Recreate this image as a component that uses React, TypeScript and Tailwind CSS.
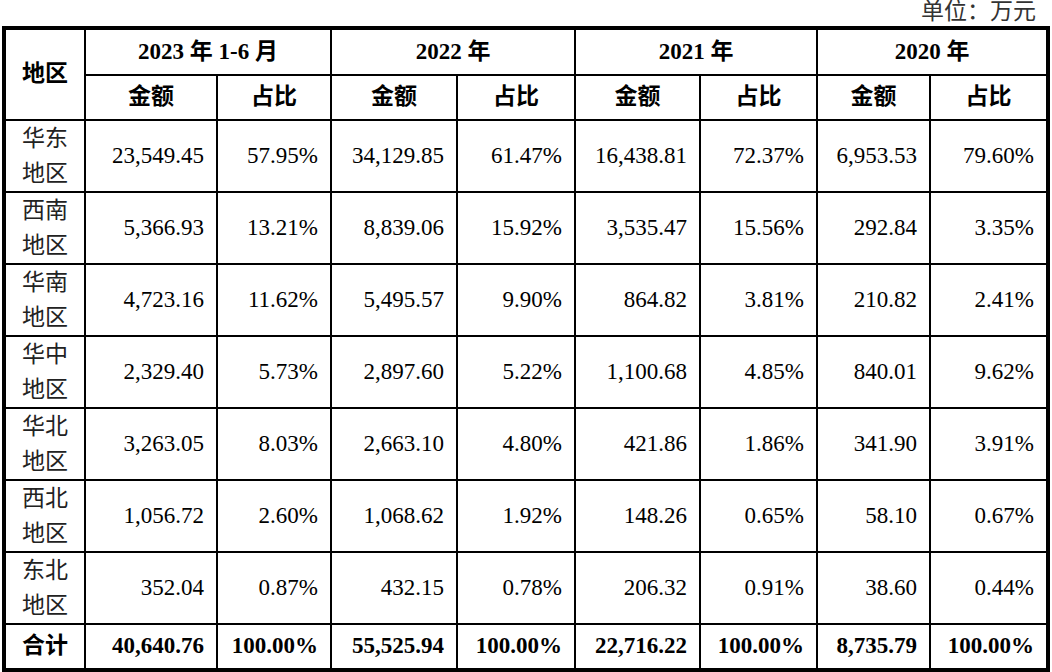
const rows = [
  { region: ["华东", "地区"], v: ["23,549.45", "57.95%", "34,129.85", "61.47%", "16,438.81", "72.37%", "6,953.53", "79.60%"], h: "h-[72px]" },
  { region: ["西南", "地区"], v: ["5,366.93", "13.21%", "8,839.06", "15.92%", "3,535.47", "15.56%", "292.84", "3.35%"], h: "h-[71px]" },
  { region: ["华南", "地区"], v: ["4,723.16", "11.62%", "5,495.57", "9.90%", "864.82", "3.81%", "210.82", "2.41%"], h: "h-[72px]" },
  { region: ["华中", "地区"], v: ["2,329.40", "5.73%", "2,897.60", "5.22%", "1,100.68", "4.85%", "840.01", "9.62%"], h: "h-[72px]" },
  { region: ["华北", "地区"], v: ["3,263.05", "8.03%", "2,663.10", "4.80%", "421.86", "1.86%", "341.90", "3.91%"], h: "h-[71px]" },
  { region: ["西北", "地区"], v: ["1,056.72", "2.60%", "1,068.62", "1.92%", "148.26", "0.65%", "58.10", "0.67%"], h: "h-[72px]" },
  { region: ["东北", "地区"], v: ["352.04", "0.87%", "432.15", "0.78%", "206.32", "0.91%", "38.60", "0.44%"], h: "h-[72px]" },
];

const totals = ["40,640.76", "100.00%", "55,525.94", "100.00%", "22,716.22", "100.00%", "8,735.79", "100.00%"];
const years = ["2023 年 1-6 月", "2022 年", "2021 年", "2020 年"];
const colWidths = ["w-[81px]", "w-[132px]", "w-[114px]", "w-[126px]", "w-[118px]", "w-[125px]", "w-[117px]", "w-[113px]", "w-[118px]"];

export default function App() {
  return (
    <div className="w-[1052px] h-[672px] bg-white text-black font-['Liberation_Serif','Noto_Sans_CJK_SC',serif] overflow-hidden">
      <div className="h-[26px] pt-[1px] pr-[16px] text-right text-[23px] leading-[21px] text-[#333]">单位：万元</div>
      <table className="ml-[2px] w-[1048px] table-fixed border-collapse border-[4px] border-black text-[23px]">
        <colgroup>
          {colWidths.map((w, i) => (
            <col key={i} className={w} />
          ))}
        </colgroup>
        <thead>
          <tr className="h-[47px]">
            <th rowSpan={2} className="border-2 border-black font-bold text-center">地区</th>
            {years.map((y) => (
              <th key={y} colSpan={2} className="border-2 border-black font-bold text-center">{y}</th>
            ))}
          </tr>
          <tr className="h-[45px]">
            {years.map((y) => (
              <>
                <th key={y + "a"} className="border-2 border-black font-bold text-center">金额</th>
                <th key={y + "b"} className="border-2 border-black font-bold text-center">占比</th>
              </>
            ))}
          </tr>
        </thead>
        <tbody>
          {rows.map((r) => (
            <tr key={r.region[0]} className={r.h}>
              <td className="border-2 border-black text-center leading-[35px] text-[#222]">
                <div>{r.region[0]}</div>
                <div>{r.region[1]}</div>
              </td>
              {r.v.map((v, i) => (
                <td key={i} className="border-2 border-black text-right pr-[12px]">{v}</td>
              ))}
            </tr>
          ))}
          <tr className="h-[46px]">
            <td className="border-2 border-black text-center font-bold">合计</td>
            {totals.map((v, i) => (
              <td key={i} className="border-2 border-black text-right pr-[12px] font-bold">{v}</td>
            ))}
          </tr>
        </tbody>
      </table>
    </div>
  );
}
